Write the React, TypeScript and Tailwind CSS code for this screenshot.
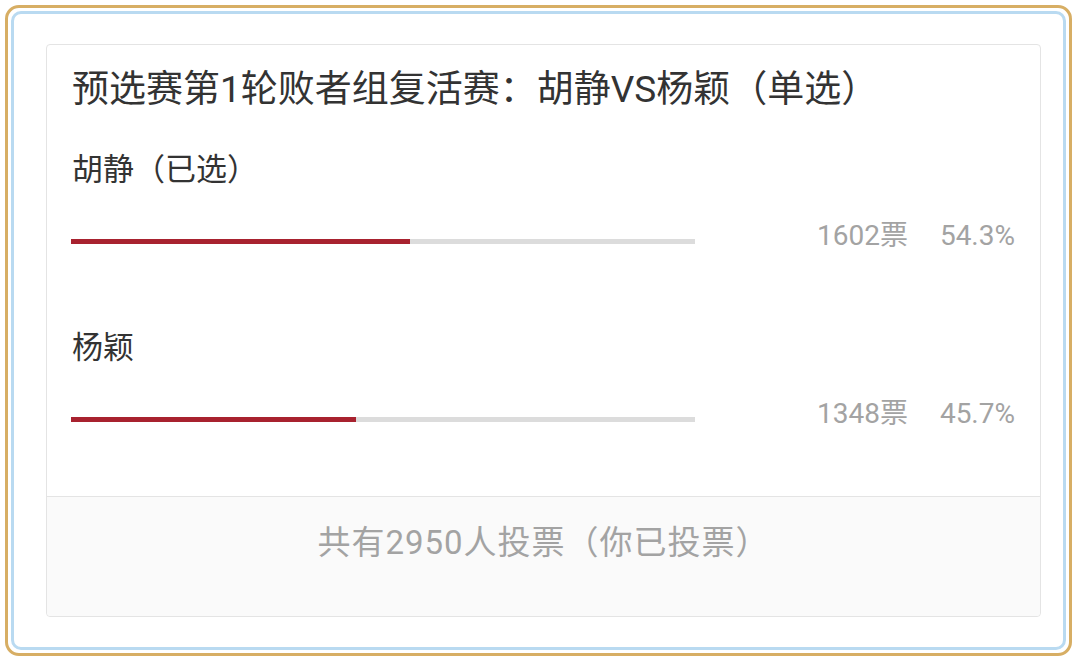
import React from "react";

const font = { fontFamily: 'Roboto, "Noto Sans CJK SC", "Noto Sans", sans-serif' };

function Option({ label, votes, pct, width }: { label: string; votes: number; pct: string; width: number }) {
  return (
    <div className="flex flex-col">
      <div className="h-[40px] leading-[40px] text-[31px] text-[#333333]">{label}</div>
      <div className="mt-[30px] flex items-start">
        <div className="mt-[19px] h-[5px] w-[624px] -ml-[1px] bg-[#dcdcdc]">
          <div className="h-full bg-[#a8222f]" style={{ width: `${width}%` }} />
        </div>
        <div className="flex flex-1 justify-end h-[32px] leading-[32px] text-[28px] text-[#a3a3a3]">
          <span>{votes}票</span>
          <span className="ml-[32px]">{pct}</span>
        </div>
      </div>
    </div>
  );
}

export default function App() {
  return (
    <div className="w-[1080px] h-[663px] bg-white p-[5px]" style={font}>
      <div className="w-[1067px] h-[651px] rounded-[14px] border-[3px] border-[#d7ae64] p-[3px]">
        <div className="h-full rounded-[10px] border-[3px] border-[#b9daf1] bg-white pl-[32px] pr-[22px] pt-[30px] pb-[30px]">
          <div className="h-full rounded-[4px] border border-[#e4e4e4] bg-white flex flex-col">
            <div className="flex-1 px-[25px]">
              <div className="pt-[20px] h-[70px] leading-[50px] text-[37px] text-[#333333] whitespace-nowrap">
                预选赛第1轮败者组复活赛：胡静VS杨颖（单选）
              </div>
              <div className="mt-[35px]">
                <Option label="胡静（已选）" votes={1602} pct="54.3%" width={54.3} />
              </div>
              <div className="mt-[76px]">
                <Option label="杨颖" votes={1348} pct="45.7%" width={45.7} />
              </div>
            </div>
            <div className="h-[120px] border-t border-[#e4e4e4] bg-[#fafafa] rounded-b-[4px] pt-[26px] text-center text-[33px] tracking-[1px] leading-[40px] text-[#a3a3a3] whitespace-nowrap">
              共有2950人投票（你已投票）
            </div>
          </div>
        </div>
      </div>
    </div>
  );
}
